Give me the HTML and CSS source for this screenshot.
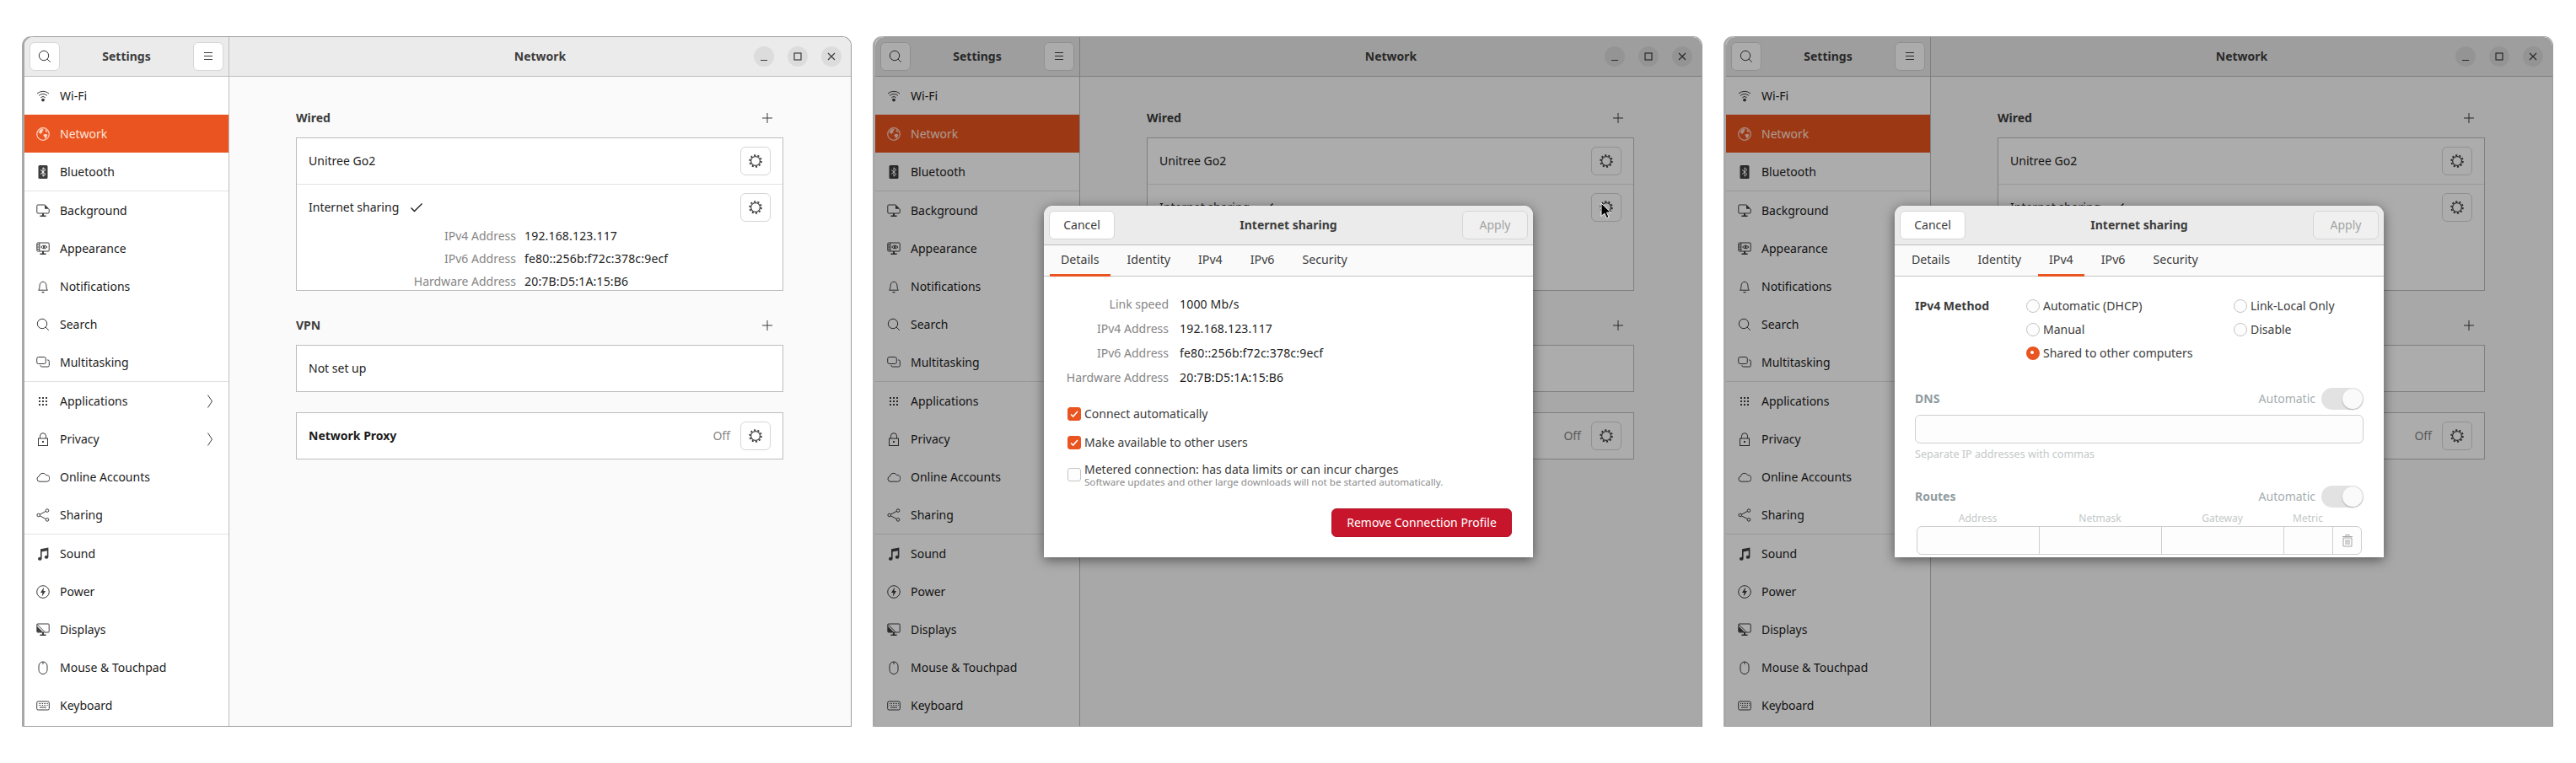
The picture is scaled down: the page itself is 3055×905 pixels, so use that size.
FILE: index.html
```html
<!DOCTYPE html>
<html>
<head>
    <meta charset="utf-8">
    <title>Network settings</title>
    <link rel="stylesheet" href="styles.css">
</head>
<body>
<svg class="defs" width="0" height="0">
    <symbol id="i-search" viewBox="0 0 16 16"><circle cx="7" cy="7" r="5.7"/><path d="M11 11l3.8 3.8"/></symbol>
    <symbol id="i-menu" viewBox="0 0 16 16"><path d="M3 3.5h10M3 7.5h10M3 11.5h10"/></symbol>
    <symbol id="i-wifi" viewBox="0 0 16 16"><path d="M1 5a10.5 10.5 0 0 1 14 0M3.1 7.4a7.3 7.3 0 0 1 9.8 0M5.3 9.7a4 4 0 0 1 5.4 0"/><circle class="solid" cx="8" cy="12.6" r="1.9"/></symbol>
    <symbol id="i-globe" viewBox="0 0 16 16"><circle cx="8" cy="8" r="7.3" stroke-width="1.2"/><path class="solid" d="M2.4 6.5L4.5 2.8 8 1.6l.6 1.6L7 4.6l.7 1.5-1.8.7-.5 1.6-1.6-2zM8.6 8.4l3-.7 1.8 1.3-1.2 3-1.8 1.7-.6-2.4-1.3-1.2zM10.3 2.4l2.3 1.3 1 2.3-2.4-.7z"/></symbol>
    <symbol id="i-bluetooth" viewBox="0 0 16 16"><rect class="solid" x="2.5" y="0" width="11" height="16" rx="1.5"/><path class="rune" d="M5 5.4l6 5.2L8 13.2V2.8l3 2.6-6 5.2"/></symbol>
    <symbol id="i-background" viewBox="0 0 16 16"><path d="M10 1H2a1.2 1.2 0 0 0-1.2 1.2v7.6A1.2 1.2 0 0 0 2 11h12a1.2 1.2 0 0 0 1.2-1.2V6"/><path class="solid" d="M10 .6l5.4 5.2H10zM7 11h2v2.4h2.6V15H4.4v-1.6H7z"/></symbol>
    <symbol id="i-appearance" viewBox="0 0 16 16"><rect x=".8" y="1" width="14.4" height="10" rx="1"/><path d="M1 3.5h2.6M1 6h2.6M1 8.5h2.6M3.8 1v10M5.5 6q3.5-3.6 7.5 0-4 3.6-7.5 0z"/><circle class="solid" cx="9.2" cy="6" r="1.2"/><path class="solid" d="M7 11h2v2.4h2.6V15H4.4v-1.6H7z"/></symbol>
    <symbol id="i-bell" viewBox="0 0 16 16"><path d="M2.5 12.2c1.2-1.2 1.5-2.5 1.5-5 0-2.8 1.6-5 4-5s4 2.2 4 5c0 2.5.3 3.8 1.5 5z"/><path class="solid" d="M6.5 14h3v1.2h-3z"/></symbol>
    <symbol id="i-tasks" viewBox="0 0 16 16"><rect x=".7" y="1.5" width="10.6" height="8" rx="2"/><path d="M13 5h.8a1.5 1.5 0 0 1 1.5 1.5v5a1.5 1.5 0 0 1-1.5 1.5H6.5A1.5 1.5 0 0 1 5 11.5v-.5"/></symbol>
    <symbol id="i-apps" viewBox="0 0 16 16"><path class="solid" d="M3 3h2v2H3zM7 3h2v2H7zM11 3h2v2h-2zM3 7h2v2H3zM7 7h2v2H7zM11 7h2v2h-2zM3 11h2v2H3zM7 11h2v2H7zM11 11h2v2h-2z"/></symbol>
    <symbol id="i-lock" viewBox="0 0 16 16"><rect x="2.5" y="7" width="11" height="8.5"/><path d="M4.5 7V4.2a3.5 3.5 0 0 1 7 0V7"/><rect class="solid" x="7" y="10" width="2" height="2"/></symbol>
    <symbol id="i-cloud" viewBox="0 0 16 16"><path d="M4 13.2a3.2 3.2 0 0 1-.6-6.3A4.4 4.4 0 0 1 11.6 5.6a3.8 3.8 0 0 1 .8 7.6z"/></symbol>
    <symbol id="i-share" viewBox="0 0 16 16"><circle cx="2.7" cy="8" r="1.8"/><circle cx="13" cy="2.6" r="1.8"/><circle cx="13" cy="13.4" r="1.8"/><path d="M4.3 7.2l7.1-3.8M4.3 8.8l7.1 3.8"/></symbol>
    <symbol id="i-music" viewBox="0 0 16 16"><path class="solid" d="M5 2.2L14.4 .6v11.2a2.3 2 0 1 1-1.6-1.9V4.3L6.6 5.4v8.4a2.3 2 0 1 1-1.6-1.9z"/></symbol>
    <symbol id="i-power" viewBox="0 0 16 16"><circle cx="8" cy="8" r="7.3"/><path class="solid" d="M9 2.6L5 9h2.4L6.8 13.4 11 7H8.5z"/></symbol>
    <symbol id="i-displays" viewBox="0 0 16 16"><rect x=".8" y="1" width="14.4" height="10" rx="1"/><path d="M1 1.5l9 9M1 6l4.5 4.5"/><path class="solid" d="M1 4l7 6.8H1zM7 11h2v2.4h2.6V15H4.4v-1.6H7z"/></symbol>
    <symbol id="i-mouse" viewBox="0 0 16 16"><path d="M3 6a5 5 0 0 1 10 0v4.5a5 5 0 0 1-10 0zM8 1v3"/></symbol>
    <symbol id="i-keyboard" viewBox="0 0 16 16"><rect x=".7" y="3" width="14.6" height="10" rx="1.5"/><path class="solid" d="M3 5h1v1H3zM5 5h1v1H5zM7 5h1v1H7zM9 5h1v1H9zM11 5h1v1h-1zM13 5h.8v1H13zM3 7h1v1H3zM5 7h1v1H5zM7 7h1v1H7zM9 7h1v1H9zM11 7h1v1h-1zM13 7h.8v1H13zM4 9.5h8v1H4z"/></symbol>
    <symbol id="i-chevron" viewBox="0 0 16 16"><path d="M5.5 .5l5 7.5-5 7.5"/></symbol>
    <symbol id="i-check" viewBox="0 0 16 16"><path d="M1.5 8.5l4 4L14.5 3.5" stroke-width="1.4"/></symbol>
    <symbol id="i-plus" viewBox="0 0 16 16"><path d="M8 2v12M2 8h12"/></symbol>
    <symbol id="i-gear" viewBox="0 0 16 16"><circle cx="8" cy="8" r="5.4" stroke-width="1.2"/><circle cx="8" cy="8" r="6.9" stroke-width="1.7" stroke-dasharray="2.2 2.14"/></symbol>
    <symbol id="i-trash" viewBox="0 0 16 16"><path d="M3 5h10v10H3zM2 3.5h12M6 3.5V1.500h4v2M6 7v6M8 7v6M10 7v6"/></symbol>
</svg>

<div class="desk">

    <div class="win">
        <aside class="side">
            <div class="bar">
                <button class="btn square"><svg class="ic"><use href="#i-search"/></svg></button>
                <span class="bar-title">Settings</span>
                <button class="btn square"><svg class="ic"><use href="#i-menu"/></svg></button>
            </div>
            <div class="nav-item"><svg class="ic"><use href="#i-wifi"/></svg>Wi-Fi</div>
            <div class="nav-item active"><svg class="ic"><use href="#i-globe"/></svg>Network</div>
            <div class="nav-item"><svg class="ic"><use href="#i-bluetooth"/></svg>Bluetooth</div>
            <div class="nav-sep"></div>
            <div class="nav-item"><svg class="ic"><use href="#i-background"/></svg>Background</div>
            <div class="nav-item"><svg class="ic"><use href="#i-appearance"/></svg>Appearance</div>
            <div class="nav-item"><svg class="ic"><use href="#i-bell"/></svg>Notifications</div>
            <div class="nav-item"><svg class="ic"><use href="#i-search"/></svg>Search</div>
            <div class="nav-item"><svg class="ic"><use href="#i-tasks"/></svg>Multitasking</div>
            <div class="nav-sep"></div>
            <div class="nav-item"><svg class="ic"><use href="#i-apps"/></svg>Applications<svg class="ic more"><use href="#i-chevron"/></svg></div>
            <div class="nav-item"><svg class="ic"><use href="#i-lock"/></svg>Privacy<svg class="ic more"><use href="#i-chevron"/></svg></div>
            <div class="nav-item"><svg class="ic"><use href="#i-cloud"/></svg>Online Accounts</div>
            <div class="nav-item"><svg class="ic"><use href="#i-share"/></svg>Sharing</div>
            <div class="nav-sep"></div>
            <div class="nav-item"><svg class="ic"><use href="#i-music"/></svg>Sound</div>
            <div class="nav-item"><svg class="ic"><use href="#i-power"/></svg>Power</div>
            <div class="nav-item"><svg class="ic"><use href="#i-displays"/></svg>Displays</div>
            <div class="nav-item"><svg class="ic"><use href="#i-mouse"/></svg>Mouse &amp; Touchpad</div>
            <div class="nav-item"><svg class="ic"><use href="#i-keyboard"/></svg>Keyboard</div>
        </aside>
        <main class="main">
            <div class="bar main-bar">
                <span class="bar-title">Network</span>
                <div class="controls">
                    <span class="ctl"><svg viewBox="0 0 12 12"><path d="M2 10.5h8"/></svg></span>
                    <span class="ctl"><svg viewBox="0 0 12 12"><rect x="2" y="2" width="8" height="8"/></svg></span>
                    <span class="ctl"><svg viewBox="0 0 12 12"><path d="M2 2l8 8M10 2l-8 8"/></svg></span>
                </div>
            </div>
            <div class="panel">
                <div class="sec-head"><span>Wired</span><svg class="ic"><use href="#i-plus"/></svg></div>
                <div class="box">
                    <div class="row"><span>Unitree Go2</span><button class="btn gear"><svg class="ic"><use href="#i-gear"/></svg></button></div>
                    <div class="row-sep"></div>
                    <div class="row sharing"><span>Internet sharing</span><svg class="ic tick"><use href="#i-check"/></svg><button class="btn gear"><svg class="ic"><use href="#i-gear"/></svg></button></div>
                    <div class="addr">
                        <span class="dim">IPv4 Address</span><span>192.168.123.117</span>
                        <span class="dim">IPv6 Address</span><span>fe80::256b:f72c:378c:9ecf</span>
                        <span class="dim">Hardware Address</span><span>20:7B:D5:1A:15:B6</span>
                    </div>
                </div>
                <div class="sec-head second"><span>VPN</span><svg class="ic"><use href="#i-plus"/></svg></div>
                <div class="box"><div class="row"><span>Not set up</span></div></div>
                <div class="box proxy"><div class="row"><b>Network Proxy</b><span class="dim off">Off</span><button class="btn gear"><svg class="ic"><use href="#i-gear"/></svg></button></div></div>
            </div>
        </main>
    </div>

    <div class="win">
        <aside class="side">
            <div class="bar">
                <button class="btn square"><svg class="ic"><use href="#i-search"/></svg></button>
                <span class="bar-title">Settings</span>
                <button class="btn square"><svg class="ic"><use href="#i-menu"/></svg></button>
            </div>
            <div class="nav-item"><svg class="ic"><use href="#i-wifi"/></svg>Wi-Fi</div>
            <div class="nav-item active"><svg class="ic"><use href="#i-globe"/></svg>Network</div>
            <div class="nav-item"><svg class="ic"><use href="#i-bluetooth"/></svg>Bluetooth</div>
            <div class="nav-sep"></div>
            <div class="nav-item"><svg class="ic"><use href="#i-background"/></svg>Background</div>
            <div class="nav-item"><svg class="ic"><use href="#i-appearance"/></svg>Appearance</div>
            <div class="nav-item"><svg class="ic"><use href="#i-bell"/></svg>Notifications</div>
            <div class="nav-item"><svg class="ic"><use href="#i-search"/></svg>Search</div>
            <div class="nav-item"><svg class="ic"><use href="#i-tasks"/></svg>Multitasking</div>
            <div class="nav-sep"></div>
            <div class="nav-item"><svg class="ic"><use href="#i-apps"/></svg>Applications<svg class="ic more"><use href="#i-chevron"/></svg></div>
            <div class="nav-item"><svg class="ic"><use href="#i-lock"/></svg>Privacy<svg class="ic more"><use href="#i-chevron"/></svg></div>
            <div class="nav-item"><svg class="ic"><use href="#i-cloud"/></svg>Online Accounts</div>
            <div class="nav-item"><svg class="ic"><use href="#i-share"/></svg>Sharing</div>
            <div class="nav-sep"></div>
            <div class="nav-item"><svg class="ic"><use href="#i-music"/></svg>Sound</div>
            <div class="nav-item"><svg class="ic"><use href="#i-power"/></svg>Power</div>
            <div class="nav-item"><svg class="ic"><use href="#i-displays"/></svg>Displays</div>
            <div class="nav-item"><svg class="ic"><use href="#i-mouse"/></svg>Mouse &amp; Touchpad</div>
            <div class="nav-item"><svg class="ic"><use href="#i-keyboard"/></svg>Keyboard</div>
        </aside>
        <main class="main">
            <div class="bar main-bar">
                <span class="bar-title">Network</span>
                <div class="controls">
                    <span class="ctl"><svg viewBox="0 0 12 12"><path d="M2 10.5h8"/></svg></span>
                    <span class="ctl"><svg viewBox="0 0 12 12"><rect x="2" y="2" width="8" height="8"/></svg></span>
                    <span class="ctl"><svg viewBox="0 0 12 12"><path d="M2 2l8 8M10 2l-8 8"/></svg></span>
                </div>
            </div>
            <div class="panel">
                <div class="sec-head"><span>Wired</span><svg class="ic"><use href="#i-plus"/></svg></div>
                <div class="box">
                    <div class="row"><span>Unitree Go2</span><button class="btn gear"><svg class="ic"><use href="#i-gear"/></svg></button></div>
                    <div class="row-sep"></div>
                    <div class="row sharing"><span>Internet sharing</span><svg class="ic tick"><use href="#i-check"/></svg><button class="btn gear"><svg class="ic"><use href="#i-gear"/></svg></button></div>
                    <div class="addr">
                        <span class="dim">IPv4 Address</span><span>192.168.123.117</span>
                        <span class="dim">IPv6 Address</span><span>fe80::256b:f72c:378c:9ecf</span>
                        <span class="dim">Hardware Address</span><span>20:7B:D5:1A:15:B6</span>
                    </div>
                </div>
                <div class="sec-head second"><span>VPN</span><svg class="ic"><use href="#i-plus"/></svg></div>
                <div class="box"><div class="row"><span>Not set up</span></div></div>
                <div class="box proxy"><div class="row"><b>Network Proxy</b><span class="dim off">Off</span><button class="btn gear"><svg class="ic"><use href="#i-gear"/></svg></button></div></div>
            </div>
        </main>
        <div class="scrim">
            <div class="dialog">
                <div class="dlg-bar">
                    <button class="btn dlg-btn">Cancel</button>
                    <span class="bar-title">Internet sharing</span>
                    <button class="btn dlg-btn off-btn">Apply</button>
                </div>
                <div class="tabs">
                    <span class="tab on">Details</span><span class="tab">Identity</span><span class="tab">IPv4</span><span class="tab">IPv6</span><span class="tab">Security</span>
                </div>
                <div class="pane">
                    <div class="facts">
                        <span class="dim">Link speed</span><span>1000 Mb/s</span>
                        <span class="dim">IPv4 Address</span><span>192.168.123.117</span>
                        <span class="dim">IPv6 Address</span><span>fe80::256b:f72c:378c:9ecf</span>
                        <span class="dim">Hardware Address</span><span>20:7B:D5:1A:15:B6</span>
                    </div>
                    <div class="checks">
                        <div class="check-row"><span class="cb cb-on"><svg viewBox="0 0 16 16"><path d="M3.5 8.5l3 3 6-7"/></svg></span>Connect automatically</div>
                        <div class="check-row"><span class="cb cb-on"><svg viewBox="0 0 16 16"><path d="M3.5 8.5l3 3 6-7"/></svg></span>Make available to other users</div>
                        <div class="check-row metered"><span class="cb"></span><div>Metered connection: has data limits or can incur charges<small>Software updates and other large downloads will not be started automatically.</small></div></div>
                    </div>
                    <div class="actions"><button class="danger">Remove Connection Profile</button></div>
                </div>
            </div>
        </div>
        <svg class="cursor" viewBox="0 0 14 20"><path d="M1 1v15.500l3.800-3.400 2.600 5.600 2.700-1.200-2.600-5.400h5z"/></svg>
    </div>

    <div class="win">
        <aside class="side">
            <div class="bar">
                <button class="btn square"><svg class="ic"><use href="#i-search"/></svg></button>
                <span class="bar-title">Settings</span>
                <button class="btn square"><svg class="ic"><use href="#i-menu"/></svg></button>
            </div>
            <div class="nav-item"><svg class="ic"><use href="#i-wifi"/></svg>Wi-Fi</div>
            <div class="nav-item active"><svg class="ic"><use href="#i-globe"/></svg>Network</div>
            <div class="nav-item"><svg class="ic"><use href="#i-bluetooth"/></svg>Bluetooth</div>
            <div class="nav-sep"></div>
            <div class="nav-item"><svg class="ic"><use href="#i-background"/></svg>Background</div>
            <div class="nav-item"><svg class="ic"><use href="#i-appearance"/></svg>Appearance</div>
            <div class="nav-item"><svg class="ic"><use href="#i-bell"/></svg>Notifications</div>
            <div class="nav-item"><svg class="ic"><use href="#i-search"/></svg>Search</div>
            <div class="nav-item"><svg class="ic"><use href="#i-tasks"/></svg>Multitasking</div>
            <div class="nav-sep"></div>
            <div class="nav-item"><svg class="ic"><use href="#i-apps"/></svg>Applications<svg class="ic more"><use href="#i-chevron"/></svg></div>
            <div class="nav-item"><svg class="ic"><use href="#i-lock"/></svg>Privacy<svg class="ic more"><use href="#i-chevron"/></svg></div>
            <div class="nav-item"><svg class="ic"><use href="#i-cloud"/></svg>Online Accounts</div>
            <div class="nav-item"><svg class="ic"><use href="#i-share"/></svg>Sharing</div>
            <div class="nav-sep"></div>
            <div class="nav-item"><svg class="ic"><use href="#i-music"/></svg>Sound</div>
            <div class="nav-item"><svg class="ic"><use href="#i-power"/></svg>Power</div>
            <div class="nav-item"><svg class="ic"><use href="#i-displays"/></svg>Displays</div>
            <div class="nav-item"><svg class="ic"><use href="#i-mouse"/></svg>Mouse &amp; Touchpad</div>
            <div class="nav-item"><svg class="ic"><use href="#i-keyboard"/></svg>Keyboard</div>
        </aside>
        <main class="main">
            <div class="bar main-bar">
                <span class="bar-title">Network</span>
                <div class="controls">
                    <span class="ctl"><svg viewBox="0 0 12 12"><path d="M2 10.5h8"/></svg></span>
                    <span class="ctl"><svg viewBox="0 0 12 12"><rect x="2" y="2" width="8" height="8"/></svg></span>
                    <span class="ctl"><svg viewBox="0 0 12 12"><path d="M2 2l8 8M10 2l-8 8"/></svg></span>
                </div>
            </div>
            <div class="panel">
                <div class="sec-head"><span>Wired</span><svg class="ic"><use href="#i-plus"/></svg></div>
                <div class="box">
                    <div class="row"><span>Unitree Go2</span><button class="btn gear"><svg class="ic"><use href="#i-gear"/></svg></button></div>
                    <div class="row-sep"></div>
                    <div class="row sharing"><span>Internet sharing</span><svg class="ic tick"><use href="#i-check"/></svg><button class="btn gear"><svg class="ic"><use href="#i-gear"/></svg></button></div>
                    <div class="addr">
                        <span class="dim">IPv4 Address</span><span>192.168.123.117</span>
                        <span class="dim">IPv6 Address</span><span>fe80::256b:f72c:378c:9ecf</span>
                        <span class="dim">Hardware Address</span><span>20:7B:D5:1A:15:B6</span>
                    </div>
                </div>
                <div class="sec-head second"><span>VPN</span><svg class="ic"><use href="#i-plus"/></svg></div>
                <div class="box"><div class="row"><span>Not set up</span></div></div>
                <div class="box proxy"><div class="row"><b>Network Proxy</b><span class="dim off">Off</span><button class="btn gear"><svg class="ic"><use href="#i-gear"/></svg></button></div></div>
            </div>
        </main>
        <div class="scrim">
            <div class="dialog">
                <div class="dlg-bar">
                    <button class="btn dlg-btn">Cancel</button>
                    <span class="bar-title">Internet sharing</span>
                    <button class="btn dlg-btn off-btn">Apply</button>
                </div>
                <div class="tabs">
                    <span class="tab">Details</span><span class="tab">Identity</span><span class="tab on">IPv4</span><span class="tab">IPv6</span><span class="tab">Security</span>
                </div>
                <div class="pane ipv4">
                    <div class="method">
                        <b>IPv4 Method</b>
                        <div class="radios">
                            <div class="radio-row"><span class="radio"></span>Automatic (DHCP)</div>
                            <div class="radio-row"><span class="radio"></span>Link-Local Only</div>
                            <div class="radio-row"><span class="radio"></span>Manual</div>
                            <div class="radio-row"><span class="radio"></span>Disable</div>
                            <div class="radio-row"><span class="radio radio-on"></span>Shared to other computers</div>
                        </div>
                    </div>
                    <div class="auto-head first"><b>DNS</b><span class="auto-label">Automatic</span><span class="switch"></span></div>
                    <div class="field"></div>
                    <div class="hint">Separate IP addresses with commas</div>
                    <div class="auto-head routes"><b>Routes</b><span class="auto-label">Automatic</span><span class="switch"></span></div>
                    <div class="route-cols"><span>Address</span><span>Netmask</span><span>Gateway</span><span>Metric</span></div>
                    <div class="route-row">
                        <span></span><span></span><span></span><span></span>
                        <span class="route-del"><svg class="ic"><use href="#i-trash"/></svg></span>
                    </div>
                </div>
            </div>
        </div>
    </div>

</div>
</body>
</html>
```

FILE: styles.css
```css
* {
    box-sizing: border-box;
}

body {
    margin: 0;
    background-color: #ffffff;
    font-family: "Noto Sans", "DejaVu Sans", sans-serif;
    font-size: 14px;
    line-height: 20px;
    color: #1c1c1c;
}

.defs {
    position: absolute;
}

.desk {
    display: flex;
    gap: 28px;
    padding: 43px 0 0 29px;
}

.ic {
    flex: none;
    width: 16px;
    height: 16px;
    fill: none;
    stroke: currentColor;
    stroke-width: 1;
}

.solid {
    fill: currentColor;
    stroke: none;
}

.rune {
    stroke: #ffffff;
    stroke-width: 1;
}

/* window */
.win {
    position: relative;
    flex: none;
    display: flex;
    width: 981px;
    height: 819px;
    border: 1px solid #9c9c9c;
    border-left: 0;
    border-radius: 11px 11px 0 0;
    box-shadow: -3px 0 0 #a8a8a8;
}

.side {
    flex: none;
    width: 243px;
    background-color: #ffffff;
    border-right: 1px solid #bdbdbd;
    border-top-left-radius: 11px;
    overflow: hidden;
}

.main {
    flex: 1;
    min-width: 0;
    background-color: #fafafa;
    border-top-right-radius: 11px;
    overflow: hidden;
}

.bar {
    display: flex;
    align-items: center;
    justify-content: space-between;
    height: 47px;
    padding: 0 6px;
    background-color: #ebebeb;
    border-bottom: 1px solid #bdbdbd;
}

.bar-title {
    font-weight: 700;
    font-size: 14px;
    color: #3d3d3d;
}

.main-bar {
    justify-content: center;
    position: relative;
}

.controls {
    position: absolute;
    right: 11px;
    top: 11px;
    display: flex;
    gap: 16px;
}

.ctl {
    display: flex;
    align-items: center;
    justify-content: center;
    width: 24px;
    height: 24px;
    border-radius: 50%;
    background-color: #dcdcdc;
}

.ctl svg {
    width: 12px;
    height: 12px;
    fill: none;
    stroke: #3d3d3d;
    stroke-width: 1.2;
}

.btn {
    display: flex;
    align-items: center;
    justify-content: center;
    padding: 0;
    font: inherit;
    color: #3d3d3d;
    background-color: #ffffff;
    border: 1px solid #d6d6d6;
    border-radius: 6px;
}

.square {
    width: 36px;
    height: 34px;
}

/* sidebar list */
.nav-item {
    display: flex;
    align-items: center;
    gap: 12px;
    height: 45px;
    padding: 0 14px;
}

.nav-item .ic {
    color: #3d3d3d;
}

.nav-item.active {
    background-color: #e95420;
    color: #ffe4da;
    margin-right: -1px;
}

.nav-item.active .ic {
    color: #ffd3c2;
}

.nav-sep {
    height: 1px;
    background-color: #e2e2e2;
}

.more {
    margin-left: auto;
}

/* network panel */
.panel {
    padding: 39px 80px 0 79px;
}

.sec-head {
    display: flex;
    align-items: center;
    justify-content: space-between;
    height: 20px;
    margin-bottom: 13px;
    padding-right: 11px;
    font-weight: 700;
    color: #3d3d3d;
}

.sec-head .ic {
    color: #3d3d3d;
}

.sec-head.second {
    margin-top: 31px;
}

.box {
    background-color: #ffffff;
    border: 1px solid #bdbdbd;
}

.box.proxy {
    margin-top: 24px;
    height: 56px;
}

.box:nth-of-type(2) {
    height: 182px;
    overflow: hidden;
}

.row {
    display: flex;
    align-items: center;
    height: 54px;
    padding: 0 14px;
}

.row-sep {
    height: 1px;
    background-color: #e2e2e2;
}

.row .gear {
    margin-left: auto;
}

.gear {
    flex: none;
    width: 36px;
    height: 34px;
    color: #3d3d3d;
}

.tick {
    margin-left: 13px;
}

.off {
    margin-left: auto;
}

.row .off + .gear {
    margin-left: 12px;
}

.dim {
    color: #868686;
}

.addr {
    display: grid;
    grid-template-columns: 246px auto;
    gap: 7px 10px;
    padding: 0 14px;
    margin-top: -3px;
}

.addr .dim,
.facts .dim {
    text-align: right;
}

.addr span:not(.dim),
.facts span:not(.dim) {
    letter-spacing: 0.18px;
}

.scrim {
    position: absolute;
    inset: 0;
    display: flex;
    justify-content: center;
    align-items: flex-start;
    padding-top: 200px;
    background-color: rgba(0, 0, 0, 0.325);
    border-top-left-radius: 11px;
    border-top-right-radius: 11px;
}

.cursor {
    position: absolute;
    left: 860px;
    top: 196px;
    width: 14px;
    height: 20px;
    fill: #000000;
    stroke: #ffffff;
    stroke-width: 1;
}

/* dialog */
.dialog {
    width: 580px;
    height: 417px;
    background-color: #ffffff;
    border-radius: 11px 11px 0 0;
    box-shadow: 0 3px 14px rgba(0, 0, 0, 0.5);
    overflow: hidden;
}

.dlg-bar {
    display: flex;
    align-items: center;
    justify-content: space-between;
    height: 47px;
    padding: 0 6px;
    background-color: #ebebeb;
    border-bottom: 1px solid #bdbdbd;
}

.dlg-btn {
    width: 78px;
    height: 34px;
}

.off-btn {
    color: #a3a3a3;
    background-color: #f0f0f0;
}

.tabs {
    display: flex;
    gap: 7px;
    height: 37px;
    padding-left: 7px;
    background-color: #fafafa;
    border-bottom: 1px solid #c4c4c4;
}

.tab {
    height: 37px;
    padding: 7px 13px 0;
    font-size: 14.2px;
    color: #3d3d3d;
}

.tab.on {
    border-bottom: 3px solid #e95420;
}

.pane {
    padding: 23px 24px 0 24px;
}

.facts {
    display: grid;
    grid-template-columns: 124px auto;
    gap: 9px 13px;
}

.checks {
    display: flex;
    flex-direction: column;
    gap: 14px;
    margin-top: 23px;
    padding-left: 4px;
    color: #3d3d3d;
}

.check-row {
    display: flex;
    align-items: center;
    gap: 4px;
}

.metered {
    margin-top: -2px;
}

.metered small {
    display: block;
    font-size: 11.6px;
    line-height: 14px;
    color: #8a8a8a;
    margin-top: -2px;
}

.cb {
    flex: none;
    width: 16px;
    height: 16px;
    background-color: #fdfdfd;
    border: 1px solid #c4c4c4;
    border-radius: 3px;
}

.cb-on {
    background-color: #e95420;
    border-color: #e95420;
}

.cb-on svg {
    display: block;
    width: 14px;
    height: 14px;
    fill: none;
    stroke: #ffffff;
    stroke-width: 1.8;
}

.actions {
    display: flex;
    justify-content: flex-end;
    margin-top: 24px;
    padding-right: 1px;
}

.danger {
    width: 214px;
    height: 34px;
    padding: 0;
    font: inherit;
    color: #ffffff;
    background-color: #c7162b;
    border: 1px solid #b51427;
    border-radius: 6px;
}

/* ipv4 tab */
.ipv4 {
    padding-top: 25px;
}

.method {
    display: flex;
    color: #3d3d3d;
}

.method b {
    width: 132px;
}

.radios {
    display: grid;
    grid-template-columns: 246px auto;
    row-gap: 8px;
}

.radio-row {
    display: flex;
    align-items: center;
    gap: 4px;
}

.radio {
    flex: none;
    width: 16px;
    height: 16px;
    background-color: #fdfdfd;
    border: 1px solid #c4c4c4;
    border-radius: 50%;
}

.radio-on {
    background-color: #e95420;
    border: 5px solid #e95420;
}

.radio-on::after {
    content: "";
    display: block;
    width: 4px;
    height: 4px;
    border-radius: 50%;
    background-color: #ffffff;
}

.auto-head {
    display: flex;
    align-items: center;
    height: 26px;
    color: #909ba0;
}

.auto-head.first {
    margin-top: 31px;
}

.auto-head.routes {
    margin-top: 30px;
}

.auto-label {
    margin-left: auto;
    margin-right: 7px;
    font-weight: 400;
    color: #a6aeb1;
}

.switch {
    position: relative;
    width: 50px;
    height: 26px;
    border-radius: 13px;
    background-color: #e2e2e2;
}

.switch::after {
    content: "";
    position: absolute;
    right: 1px;
    top: 1px;
    width: 24px;
    height: 24px;
    border-radius: 50%;
    background-color: #fafafa;
    box-shadow: 0 1px 2px rgba(0, 0, 0, 0.25);
}

.field {
    height: 34px;
    margin-top: 6px;
    background-color: #fdfdfd;
    border: 1px solid #cfcfcf;
    border-radius: 6px;
}

.hint {
    margin-top: 6px;
    font-size: 12.6px;
    line-height: 14px;
    color: #c3c8c8;
}

.route-cols,
.route-row {
    display: grid;
    grid-template-columns: 145px 145px 145px 58px 1fr;
    margin: 0 2px;
}

.route-cols {
    margin-top: 6px;
    font-size: 12px;
    line-height: 14px;
    text-align: center;
    color: #c3c8c8;
}

.route-row {
    height: 34px;
    margin-top: 2px;
    background-color: #fdfdfd;
    border: 1px solid #cfcfcf;
    border-radius: 6px;
}

.route-row span {
    border-right: 1px solid #cfcfcf;
}

.route-row .route-del {
    display: flex;
    align-items: center;
    justify-content: center;
    border-right: 0;
    color: #a5a5a5;
}
```
